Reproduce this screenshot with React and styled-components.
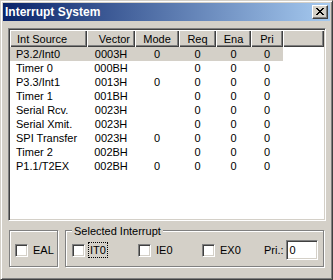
import React from "react";
import styled, { createGlobalStyle } from "styled-components";

const Global = createGlobalStyle`
  html, body { margin: 0; padding: 0; background: #d4d0c8; }
  body { width: 333px; height: 280px; overflow: hidden; }
`;

const Window = styled.div`
  box-sizing: border-box;
  width: 333px;
  height: 280px;
  background: #d4d0c8;
  border: 1px solid;
  border-color: #d4d0c8 #404040 #404040 #d4d0c8;
  box-shadow: inset 1px 1px 0 #fff, inset -1px -1px 0 #808080;
  padding: 2px;
  display: flex;
  flex-direction: column;
  font-family: "Liberation Sans", Arial, sans-serif;
  font-size: 11px;
  color: #000;
`;

const TitleBar = styled.div`
  height: 18px;
  display: flex;
  align-items: center;
  justify-content: space-between;
  padding: 0 2px;
  background: linear-gradient(to right, #0a246a, #a6caf0);
`;

const Title = styled.span`
  color: #fff;
  font-weight: bold;
  font-size: 12px;
  line-height: 18px;
  white-space: nowrap;
`;

const CloseButton = styled.div`
  box-sizing: border-box;
  width: 16px;
  height: 14px;
  background: #d4d0c8;
  border: 1px solid;
  border-color: #fff #404040 #404040 #fff;
  box-shadow: inset -1px -1px 0 #808080;
  display: flex;
  padding: 2px 0 0 3px;
`;

const Body = styled.div`
  display: flex;
  flex-direction: column;
  padding: 7px 0 0 5px;
`;

const ListView = styled.div`
  box-sizing: border-box;
  width: 318px;
  height: 193px;
  background: #fff;
  border: 1px solid;
  border-color: #808080 #fff #fff #808080;
  box-shadow: inset 1px 1px 0 #404040, inset -1px -1px 0 #d4d0c8;
  padding: 1px;
  display: flex;
  flex-direction: column;
`;

const Header = styled.div`
  display: flex;
  height: 17px;
  flex-shrink: 0;
`;

const HeaderCell = styled.div`
  box-sizing: border-box;
  width: ${(p) => (p.$w ? `${p.$w}px` : "auto")};
  flex: ${(p) => (p.$w ? "0 0 auto" : "1 1 auto")};
  height: 17px;
  background: #d4d0c8;
  box-shadow: inset 1px 1px 0 #fff, inset -1px -1px 0 #404040,
    inset -2px -2px 0 #808080;
  padding: 2px ${(p) => p.$pr || 0}px 0 ${(p) => p.$pl || 0}px;
  line-height: 14px;
  text-align: ${(p) => p.$align || "center"};
  white-space: nowrap;
  overflow: hidden;
`;

const Row = styled.div`
  display: flex;
  width: 273px;
  height: 14px;
  line-height: 14px;
  background: ${(p) => (p.$selected ? "#d4d0c8" : "transparent")};
  &:first-child {
    height: 17px;
    padding-top: 3px;
    box-sizing: border-box;
  }
`;

const Cell = styled.div`
  box-sizing: border-box;
  width: ${(p) => p.$w}px;
  text-align: ${(p) => p.$align || "center"};
  padding-left: ${(p) => p.$pl || 0}px;
  white-space: nowrap;
  overflow: hidden;
`;

const BottomRow = styled.div`
  display: flex;
  align-items: flex-start;
  margin: 9px 0 0 1px;
`;

const Group = styled.div`
  position: relative;
  box-sizing: border-box;
  width: ${(p) => p.$w}px;
  height: 37px;
  margin-left: ${(p) => p.$ml || 0}px;
  border: 1px solid #808080;
  box-shadow: inset 1px 1px 0 #fff, 1px 1px 0 #fff;
  display: flex;
  align-items: center;
  padding: 3px 0 0 ${(p) => p.$pl || 0}px;
`;

const GroupTitle = styled.span`
  position: absolute;
  left: 6px;
  top: -6px;
  padding: 0 2px;
  background: #d4d0c8;
  line-height: 13px;
  white-space: nowrap;
`;

const CheckItem = styled.div`
  display: flex;
  align-items: center;
  width: ${(p) => (p.$w ? `${p.$w}px` : "auto")};
  flex-shrink: 0;
`;

const CheckBox = styled.div`
  box-sizing: border-box;
  width: 13px;
  height: 13px;
  background: #fff;
  border: 1px solid;
  border-color: #808080 #fff #fff #808080;
  box-shadow: inset 1px 1px 0 #404040, inset -1px -1px 0 #d4d0c8;
  flex-shrink: 0;
`;

const CheckLabel = styled.span`
  margin-left: 3px;
  padding: 0 1px;
  line-height: 14px;
  border: 1px dotted ${(p) => (p.$focus ? "#000" : "transparent")};
  white-space: nowrap;
`;

const PriLabel = styled.span`
  white-space: nowrap;
  margin-right: 2px;
`;

const Field = styled.div`
  box-sizing: border-box;
  width: 32px;
  height: 20px;
  background: #fff;
  border: 1px solid;
  border-color: #808080 #fff #fff #808080;
  box-shadow: inset 1px 1px 0 #404040, inset -1px -1px 0 #d4d0c8;
  padding: 2px 0 0 3px;
  line-height: 14px;
`;

const cols = [
  { key: "src", label: "Int Source", w: 77, align: "left", pl: 6, hpl: 7 },
  { key: "vec", label: "Vector", w: 48, hAlign: "right", hpr: 5 },
  { key: "mode", label: "Mode", w: 44 },
  { key: "req", label: "Req", w: 37 },
  { key: "ena", label: "Ena", w: 35 },
  { key: "pri", label: "Pri", w: 32 },
];

const rows = [
  ["P3.2/Int0", "0003H", "0", "0", "0", "0"],
  ["Timer 0", "000BH", "", "0", "0", "0"],
  ["P3.3/Int1", "0013H", "0", "0", "0", "0"],
  ["Timer 1", "001BH", "", "0", "0", "0"],
  ["Serial Rcv.", "0023H", "", "0", "0", "0"],
  ["Serial Xmit.", "0023H", "", "0", "0", "0"],
  ["SPI Transfer", "0023H", "0", "0", "0", "0"],
  ["Timer 2", "002BH", "", "0", "0", "0"],
  ["P1.1/T2EX", "002BH", "0", "0", "0", "0"],
];

const CloseGlyph = () => (
  <svg width="8" height="7" viewBox="0 0 8 7" shapeRendering="crispEdges">
    <path
      fill="#000"
      d="M0 0h2v1H0zM6 0h2v1H6zM1 1h2v1H1zM5 1h2v1H5zM2 2h4v1H2zM3 3h2v1H3zM2 4h4v1H2zM1 5h2v1H1zM5 5h2v1H5zM0 6h2v1H0zM6 6h2v1H6z"
    />
  </svg>
);

export default function App() {
  return (
    <>
      <Global />
      <Window>
        <TitleBar>
          <Title>Interrupt System</Title>
          <CloseButton>
            <CloseGlyph />
          </CloseButton>
        </TitleBar>
        <Body>
          <ListView>
            <Header>
              {cols.map((c) => (
                <HeaderCell
                  key={c.key}
                  $w={c.w}
                  $align={c.hAlign || c.align}
                  $pl={c.hpl}
                  $pr={c.hpr}
                >
                  {c.label}
                </HeaderCell>
              ))}
              <HeaderCell />
            </Header>
            {rows.map((r, i) => (
              <Row key={i} $selected={i === 0}>
                {cols.map((c, j) => (
                  <Cell key={c.key} $w={c.w} $align={c.align} $pl={c.pl}>
                    {r[j]}
                  </Cell>
                ))}
              </Row>
            ))}
          </ListView>
          <BottomRow>
            <Group $w={49} $pl={5}>
              <CheckItem>
                <CheckBox />
                <CheckLabel>EAL</CheckLabel>
              </CheckItem>
            </Group>
            <Group $w={259} $ml={7} $pl={6}>
              <GroupTitle>Selected Interrupt</GroupTitle>
              <CheckItem $w={66}>
                <CheckBox />
                <CheckLabel $focus>IT0</CheckLabel>
              </CheckItem>
              <CheckItem $w={64}>
                <CheckBox />
                <CheckLabel>IE0</CheckLabel>
              </CheckItem>
              <CheckItem $w={62}>
                <CheckBox />
                <CheckLabel>EX0</CheckLabel>
              </CheckItem>
              <PriLabel>Pri.:</PriLabel>
              <Field>0</Field>
            </Group>
          </BottomRow>
        </Body>
      </Window>
    </>
  );
}
